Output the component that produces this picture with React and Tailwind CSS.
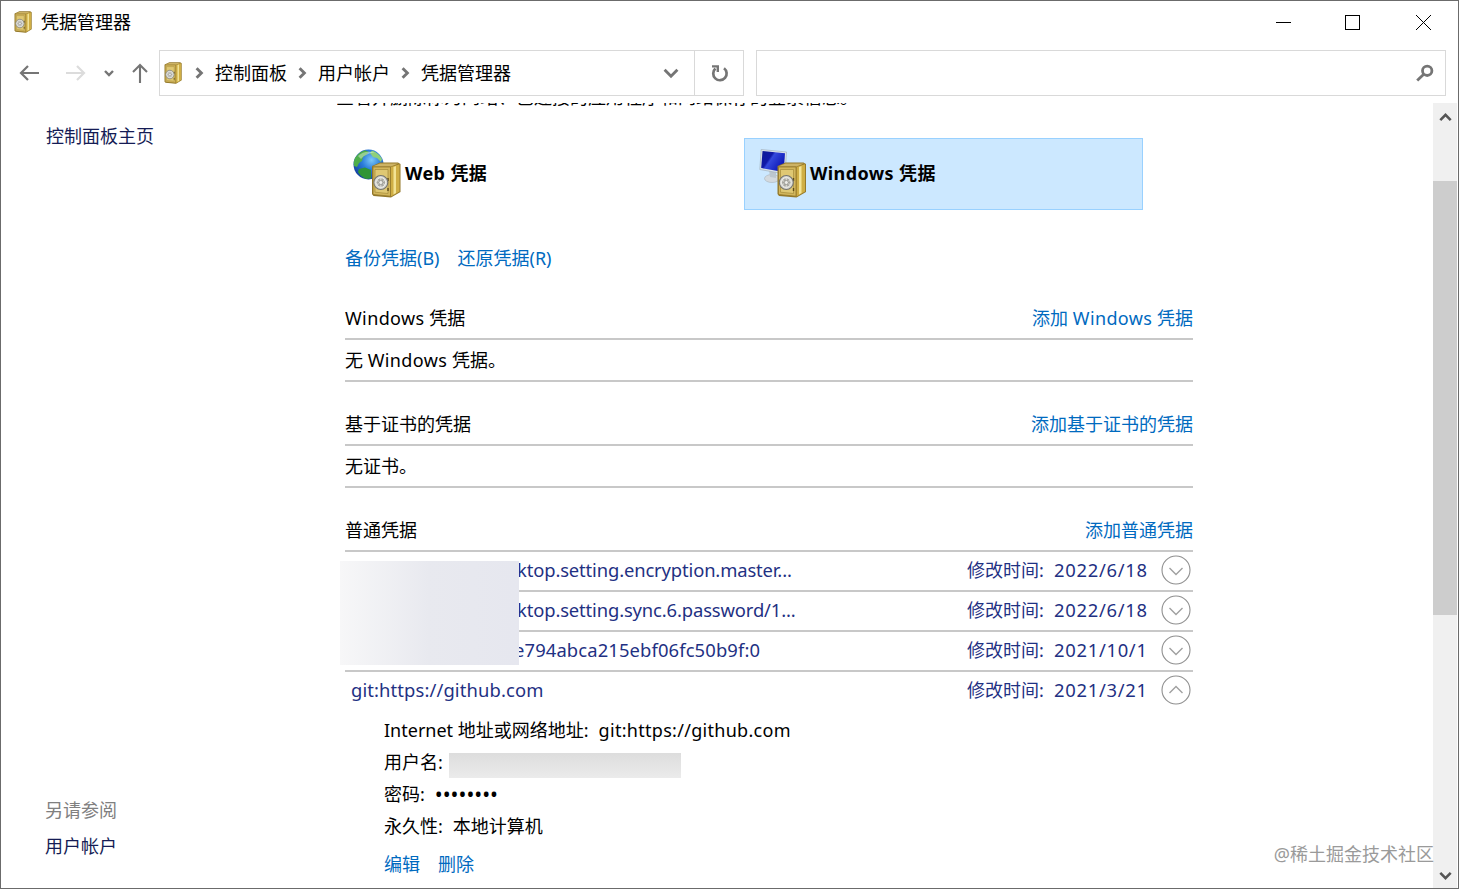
const vaults = [
    { name: 'ktop.setting.encryption.master...', hidden: true, date: '2022/6/18' },
    { name: 'ktop.setting.sync.6.password/1...', hidden: true, date: '2022/6/18' },
    { name: 'e794abca215ebf06fc50b9f:0', hidden: true, clipped: true, date: '2021/10/1' },
    { name: 'git:https://github.com', date: '2021/3/21', open: true },
];

const crumbs = ['控制面板', '用户帐户', '凭据管理器'];

// Body of the safe, drawn on a 30x36 grid
const SafeShape = () => (
    <>
        <path d="M1 4 L9 0.5 H27 L29.5 2 V30 L20 35.5 L2.5 34 L1 32 Z" fill="#94792b" />
        <path d="M1.5 4.5 L9 1.5 H27.5 L20 4.5 Z" fill="#cdb364" />
        <path d="M20 5 L28.5 2.2 V29.5 L20 34.5 Z" fill="#cfae45" />
        <path d="M22.5 5 L25 4 V31 L22.5 32.5 Z" fill="#f3e395" />
        <path d="M2 5 H19.5 V34.2 L2 32.5 Z" fill="#d2b65c" stroke="#8f7426" strokeWidth="0.7" />
        <path d="M4 7.5 H17 V31.5 L4 30.2 Z" fill="#dfc873" stroke="#a58b3a" strokeWidth="0.7" />
        <path d="M17 16 V19 M17 26 V29" stroke="#5e4b18" strokeWidth="1.4" />
        <circle cx="9.8" cy="20.5" r="7" fill="#d8d8d3" stroke="#74746d" strokeWidth="1.1" />
        <circle cx="9.8" cy="20.5" r="4.8" fill="#a9a9a3" stroke="#f4f4ee" strokeWidth="1" />
        <path d="M9.8 15.8 V25.2 M5.6 18.2 L14 22.8 M14 18.2 L5.6 22.8" stroke="#deded9" strokeWidth="1" />
        <circle cx="9.8" cy="20.5" r="2" fill="#eeeeea" stroke="#7d7d76" strokeWidth="0.6" />
    </>
);

const SafeIcon = () => (
    <svg width="18" height="22" viewBox="0 0 30 36" preserveAspectRatio="none">
        <SafeShape />
    </svg>
);

const WebIcon = () => (
    <svg width="50" height="50" viewBox="0 0 50 50">
        <defs>
            <radialGradient id="globe" cx="0.6" cy="0.35" r="0.7">
                <stop offset="0" stopColor="#7cc8f8" />
                <stop offset="0.45" stopColor="#2b7ddb" />
                <stop offset="1" stopColor="#143f9c" />
            </radialGradient>
        </defs>
        <circle cx="15.5" cy="15.5" r="15" fill="url(#globe)" />
        <path d="M2 9 Q6 3 12 1.2 L16 3 L13 6 L10 8 L9 12 L6 14 L4 18 L1 17 Q0 13 2 9 Z" fill="#4fae4a" />
        <path d="M19 1.5 Q26 4 29 10 L28 13 L24 9 L20 8 L17 4 Z" fill="#8fd07a" />
        <path d="M6 20 L12 18.5 L18 21 L18 29.5 L13 30 Q7 27 5 23 Z" fill="#2f9436" />
        <path d="M5 7 Q11 1 22 3.5 Q13 4 8 10 Z" fill="#ffffff" opacity="0.4" />
        <g transform="translate(18 13)">
            <SafeShape />
        </g>
    </svg>
);

const ComputerIcon = () => (
    <svg width="50" height="50" viewBox="0 0 50 50">
        <defs>
            <linearGradient id="screen" x1="0" y1="0" x2="1" y2="0.6">
                <stop offset="0" stopColor="#0d1a94" />
                <stop offset="0.4" stopColor="#1018a8" />
                <stop offset="0.48" stopColor="#3448dc" />
                <stop offset="1" stopColor="#0a14b4" />
            </linearGradient>
        </defs>
        <ellipse cx="13" cy="29.5" rx="7.5" ry="4" fill="#d3d9de" stroke="#aab3bb" strokeWidth="0.6" />
        <path d="M10 21 L17 22.5 L17 29 L11 28 Z" fill="#bcc6ce" />
        <path d="M2.2 0.5 L27.5 3 L26 25 L0.8 20.5 Z" fill="#dde4ea" stroke="#9ba9b5" strokeWidth="0.6" />
        <path d="M3.5 2 L26 4.2 L24.7 23 L2.2 19 Z" fill="url(#screen)" />
        <g transform="translate(17.5 13)">
            <SafeShape />
        </g>
    </svg>
);

const Chevron = ({ className, size = 10, width = 2.4, dir = 'down' }) => {
    const paths = {
        down: 'M1 3 L5 7 L9 3',
        up: 'M1 7 L5 3 L9 7',
        right: 'M3 1 L7 5 L3 9',
    };
    return (
        <svg className={className} width={size} height={size} viewBox="0 0 10 10" fill="none" stroke="currentColor" strokeWidth={width}>
            <path d={paths[dir]} />
        </svg>
    );
};

const ExpandButton = ({ open }) => (
    <svg width="30" height="30" viewBox="0 0 30 30" fill="none" stroke="#8f8f8f">
        <circle cx="15" cy="15" r="14" strokeWidth="1.1" />
        <path d={open ? 'M8.5 18 L15 11.5 L21.5 18' : 'M8.5 13 L15 19.5 L21.5 13'} strokeWidth="1.4" stroke="#a0a0a0" />
    </svg>
);

const Latin = ({ children }) => <span className="tracking-[0.38px]">{children}</span>;

const TitleBar = () => (
    <header className="flex h-[49px] shrink-0 items-start justify-between">
        <div className="flex h-[42px] items-center pl-[13px]">
            <SafeIcon />
            <span className="ml-[9px]">凭据管理器</span>
        </div>
        <svg className="mr-2" width="174" height="43" viewBox="0 0 174 43" fill="none" stroke="#000" strokeWidth="1" shapeRendering="crispEdges">
            <path d="M0 21.5 H15" />
            <rect x="69.5" y="14.5" width="14" height="14" />
            <path d="M140 14 L155 29 M155 14 L140 29" shapeRendering="auto" />
        </svg>
    </header>
);

const NavBar = () => (
    <div className="flex h-[46px] shrink-0 items-stretch pr-3">
        <div className="flex w-[158px] items-center pl-[18px]">
            <svg width="22" height="18" viewBox="0 0 22 18" fill="none" stroke="#757575" strokeWidth="2.2">
                <path d="M20 9 H2 M9 2 L2 9 L9 16" />
            </svg>
            <svg className="ml-[24px]" width="22" height="18" viewBox="0 0 22 18" fill="none" stroke="#dcdcdc" strokeWidth="2.2">
                <path d="M1 9 H19 M12 2 L19 9 L12 16" />
            </svg>
            <Chevron className="ml-[17px] text-[#757575]" />
            <svg className="ml-[17px]" width="18" height="22" viewBox="0 0 18 22" fill="none" stroke="#757575" strokeWidth="2.1">
                <path d="M9 21 V3 M2 10 L9 3 L16 10" />
            </svg>
        </div>
        <div className="flex w-[585px] border border-[#d9d9d9]">
            <div className="flex flex-1 items-center pb-px pl-1">
                <SafeIcon />
                {crumbs.map((crumb, i) => (
                    <div key={crumb} className="flex items-center">
                        <Chevron dir="right" size={12} width={2.4} className={i === 0 ? 'ml-[11px] text-[#757575]' : 'ml-[9px] text-[#757575]'} />
                        <span className="ml-[10px]">{crumb}</span>
                    </div>
                ))}
                <Chevron size={16} width={1.8} className="mr-[15px] ml-auto text-[#757575]" />
            </div>
            <div className="flex w-[49px] items-center justify-center border-l border-[#d9d9d9]">
                <svg className="ml-[2px]" width="18" height="18" viewBox="0 0 18 18" fill="none" stroke="#757575" strokeWidth="2.7">
                    <path d="M13 4.2 A6.7 6.7 0 1 1 4.4 4.6" />
                    <path d="M1 2.4 H6.8 V8" strokeWidth="2.4" />
                </svg>
            </div>
        </div>
        <div className="ml-3 flex flex-1 items-center justify-end border border-[#d9d9d9] pr-[11px]">
            <svg width="18" height="18" viewBox="0 0 18 18" fill="none" stroke="#757575">
                <circle cx="11.2" cy="6.8" r="4.7" strokeWidth="2.8" />
                <path d="M8 10 L1.2 16.6" strokeWidth="2.8" />
            </svg>
        </div>
    </div>
);

const Sidebar = () => (
    <aside className="flex w-[336px] shrink-0 flex-col pl-[44px] text-[#151c55]">
        <a className="mt-[19px] ml-px h-7">控制面板主页</a>
        <span className="mt-auto h-7 text-[#808080]">另请参阅</span>
        <a className="mt-2 mb-[28px] h-7">用户帐户</a>
    </aside>
);

const Section = ({ title, action, children }) => (
    <section className="mb-[22px]">
        <div className="flex h-[42px] items-center justify-between border-b-2 border-[#c8c8c8]">
            <span>{title}</span>
            <a className="text-[#006abf]">{action}</a>
        </div>
        {children}
    </section>
);

const EmptyRow = ({ children }) => (
    <div className="flex h-[42px] items-center border-b-2 border-[#c8c8c8]">
        <span>{children}</span>
    </div>
);

const VaultRow = ({ vault }) => (
    <div
        className={`flex h-10 items-center border-b-2 pr-[2px] pb-[2px] pl-[6px] text-[#1f3183] ${vault.open ? 'border-transparent' : 'border-[#c8c8c8]'}`}
    >
        {vault.hidden && <span className={vault.clipped ? 'w-[163px] shrink-0' : 'w-[166px] shrink-0'} />}
        <span className={vault.hidden && !vault.clipped ? 'text-[18.4px] tracking-[-0.13px]' : 'text-[18.4px] tracking-[0.12px]'}>
            {vault.name}
        </span>
        <span className="ml-auto w-[87px]">修改时间:</span>
        <span className="w-[107px] text-[18.4px] tracking-[0.7px]">{vault.date}</span>
        <ExpandButton open={vault.open} />
    </div>
);

const Details = () => (
    <div className="flex flex-col pl-[39px]">
        <div className="mt-[2px] flex h-8 items-center gap-[10px]">
            <span>Internet 地址或网络地址:</span>
            <span className="tracking-[0.29px]">git:https://github.com</span>
        </div>
        <div className="flex h-8 items-center gap-[6px]">
            <span>用户名:</span>
            <span className="mt-[6px] h-[25px] w-[232px] bg-linear-to-b from-[#dddddd] to-[#ebebeb]" />
        </div>
        <div className="flex h-8 items-center gap-[10px]">
            <span>密码:</span>
            <span className="text-[21px]">••••••••</span>
        </div>
        <div className="flex h-8 items-center gap-[10px]">
            <span>永久性:</span>
            <span>本地计算机</span>
        </div>
        <div className="mt-[6px] flex h-8 items-center gap-[18px] text-[#006abf]">
            <a>编辑</a>
            <a>删除</a>
        </div>
    </div>
);

const ScrollBar = () => (
    <div className="mr-px flex w-6 shrink-0 flex-col items-center bg-[#f0f0f0] text-[#555555]">
        <Chevron dir="up" size={13} width={2} className="mt-[8px]" />
        <div className="mt-[57px] h-[434px] w-full bg-[#cdcdcd]" />
        <Chevron size={13} width={2} className="mt-auto mb-[6px]" />
    </div>
);

export default function App() {
    return (
        <div className="relative flex h-[889px] w-[1459px] flex-col overflow-hidden border border-[#6b6b6b] bg-white font-['Noto_Sans','Noto_Sans_CJK_SC',sans-serif] text-[18px] leading-7 text-black">
            <TitleBar />
            <NavBar />
            <div className="mt-[7px] flex min-h-0 flex-1">
                <Sidebar />
                <main className="min-w-0 flex-1 overflow-hidden">
                    <p className="-mt-[20px] -ml-px h-7 whitespace-nowrap">查看并删除你为网站、已连接的应用程序和网络保存的登录信息。</p>
                    <div className="mt-[27px] flex gap-[7px] pl-px font-bold tracking-[0.4px]">
                        <div className="flex h-[72px] w-[399px] items-center pl-[15px]">
                            <WebIcon />
                            <span className="mb-[2px] ml-[2px]">Web 凭据</span>
                        </div>
                        <div className="flex h-[72px] w-[399px] items-center border border-[#99d1ff] bg-[#cce8ff] pl-[14px]">
                            <ComputerIcon />
                            <span className="mb-[2px] ml-px">Windows 凭据</span>
                        </div>
                    </div>
                    <div className="ml-2 w-[848px]">
                        <div className="mt-[34px] mb-[26px] flex gap-[18px] text-[#006abf]">
                            <a>备份凭据(B)</a>
                            <a>还原凭据(R)</a>
                        </div>
                        <Section title={<><Latin>Windows</Latin> 凭据</>} action={<>添加 <Latin>Windows</Latin> 凭据</>}>
                            <EmptyRow>无 <Latin>Windows</Latin> 凭据。</EmptyRow>
                        </Section>
                        <Section title="基于证书的凭据" action="添加基于证书的凭据">
                            <EmptyRow>无证书。</EmptyRow>
                        </Section>
                        <Section title="普通凭据" action="添加普通凭据">
                            <div className="relative">
                                {vaults.map((vault, i) => (
                                    <VaultRow key={i} vault={vault} />
                                ))}
                                <div className="absolute top-[9px] -left-[5px] h-[104px] w-[179px] bg-linear-to-r from-[#f7f7f8] via-[#e8e9ef] to-[#e6e7ef]" />
                            </div>
                            <Details />
                        </Section>
                    </div>
                </main>
                <ScrollBar />
            </div>
            <span className="absolute right-[24px] bottom-[20px] text-[#9a9a9a]">@稀土掘金技术社区</span>
        </div>
    );
}
